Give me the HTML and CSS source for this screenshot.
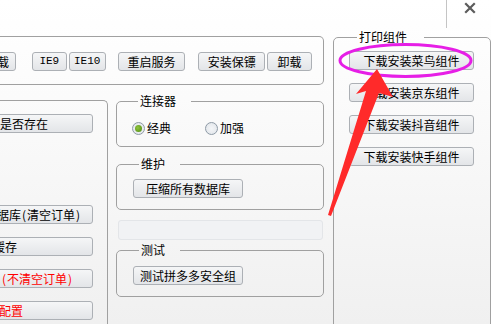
FILE: index.html
```html
<!DOCTYPE html>
<html lang="zh-CN">
<head>
<meta charset="utf-8">
<title>设置</title>
<link rel="stylesheet" href="styles.css">
</head>
<body>
<div class="window">
  <div class="titlebar">
    <span class="vline"></span>
    <svg class="close" width="12" height="12" viewBox="0 0 12 12"><path d="M2 2 L10 10 M10 2 L2 10" stroke="#5c5c5c" stroke-width="2.2" stroke-linecap="square"/></svg>
  </div>
  <div class="content">
    <div class="main">
      <div class="toolbar">
        <button class="btn cut tb-cut">载</button>
        <button class="btn ie w34">IE9</button>
        <button class="btn ie w36">IE10</button>
        <button class="btn w68">重启服务</button>
        <button class="btn w67">安装保镖</button>
        <button class="btn w45">卸载</button>
      </div>
      <div class="lower">
        <div class="leftbox">
          <button class="btn cut pr44">是否存在</button>
          <button class="btn cut pr12 first-gap">据库<span class="par">(</span>清空订单<span class="par">)</span></button>
          <button class="btn cut pr75">缓存</button>
          <button class="btn cut pr20 red"><span class="par">(</span>不清空订单<span class="par">)</span></button>
          <button class="btn cut pr69 red">配置</button>
        </div>
        <div class="midcol">
          <fieldset class="group g-conn">
            <legend>连接器</legend>
            <div class="radios">
              <label class="radio"><span class="dot on"></span>经典</label>
              <label class="radio"><span class="dot"></span>加强</label>
            </div>
          </fieldset>
          <fieldset class="group g-maint">
            <legend>维护</legend>
            <button class="btn w110">压缩所有数据库</button>
          </fieldset>
          <div class="field"></div>
          <fieldset class="group g-test">
            <legend>测试</legend>
            <button class="btn w110">测试拼多多安全组</button>
          </fieldset>
        </div>
      </div>
    </div>
    <fieldset class="group g-print">
      <legend>打印组件</legend>
      <button class="btn w125">下载安装菜鸟组件</button>
      <button class="btn w125">下载安装京东组件</button>
      <button class="btn w125">下载安装抖音组件</button>
      <button class="btn w125">下载安装快手组件</button>
    </fieldset>
  </div>
  <svg class="marks" width="491" height="324" viewBox="0 0 491 324">
    <ellipse cx="405.5" cy="60.5" rx="65.5" ry="16" fill="none" stroke="#e61ee6" stroke-width="3"/>
    <polygon points="377,69 393,97 379,93 331,216 328,215 366,91 356,94" fill="#ff2a2a"/>
  </svg>
</div>
</body>
</html>
```
FILE: styles.css
```css
* { box-sizing: border-box; }
html, body { margin: 0; padding: 0; }
body {
  width: 491px;
  height: 324px;
  overflow: hidden;
  font-family: "Noto Sans CJK SC", "Noto Sans", sans-serif;
  font-size: 12px;
  color: #000;
}
.window {
  position: relative;
  width: 491px;
  height: 324px;
  overflow: hidden;
  background: linear-gradient(#ffffff 0%, #fbfbfb 30%, #f0f0f0 100%);
}
.titlebar {
  height: 31px;
  display: flex;
  justify-content: flex-end;
  align-items: flex-start;
}
.vline {
  width: 1px;
  height: 28px;
  background: #c4c4c4;
  margin-right: 17px;
}
.close {
  margin-top: 2px;
  margin-right: 15px;
}
.content {
  display: flex;
  align-items: flex-start;
  margin-left: -80px;
}
.main {
  width: 404px;
  margin-top: 5px;
  flex: none;
}
.btn {
  font: inherit;
  font-size: 12px;
  line-height: 17px;
  height: 19px;
  padding: 0;
  margin: 0;
  color: #000;
  background: linear-gradient(#f5f6f7, #e3e5e8);
  border: 1px solid #acb0b5;
  border-radius: 3px;
  display: block;
  text-align: center;
  white-space: nowrap;
}
.btn.cut { width: 172px; text-align: right; }
.btn.red { color: #ff0000; }
.par {
  display: inline-block;
  width: 6px;
  text-align: center;
}
.btn.ie {
  font-family: "Liberation Mono", monospace;
  font-size: 11px;
}
.w34 { width: 35px; }
.w36 { width: 37px; }
.w45 { width: 45px; }
.w67 { width: 67px; }
.w68 { width: 68px; }
.w110 { width: 110px; }
.w125 { width: 125px; }

.toolbar {
  display: flex;
  align-items: center;
  border: 1px solid #a0a0a0;
  border-left: none;
  border-radius: 0 5px 5px 0;
  padding: 14px 11px 13px 0;
  height: 49px;
}
.toolbar .tb-cut { width: 40px; padding-right: 6px; margin-left: 56px; margin-right: 16px; }
.toolbar .w36 { margin-left: 2px; }
.toolbar .w68 { margin-left: 12px; }
.toolbar .w67 { margin-left: 13px; }
.toolbar .w45 { margin-left: 2px; }

.lower {
  display: flex;
  align-items: flex-start;
  margin-top: 10px;
}
.leftbox {
  width: 188px;
  height: 240px;
  margin-top: 5px;
  border: 1px solid #a0a0a0;
  border-left: none;
  border-bottom: none;
  border-radius: 0 5px 0 0;
  padding: 13px 14px 0 0;
  display: flex;
  flex-direction: column;
  align-items: flex-end;
  gap: 13px;
}
.leftbox .first-gap { margin-top: 59px; }
.pr44 { padding-right: 44px; }
.pr12 { padding-right: 11px; }
.pr75 { padding-right: 75px; }
.pr20 { padding-right: 19px; }
.pr69 { padding-right: 69px; }

.midcol {
  width: 208px;
  margin-left: 8px;
  display: flex;
  flex-direction: column;
}
.group {
  margin: 0;
  border: 1px solid #a0a0a0;
  border-radius: 5px;
  min-width: 0;
}
.group legend {
  font-size: 12px;
  line-height: 12px;
  height: 12px;
  padding: 0 15px 0 2px;
  margin-left: 6px;
}
.g-conn { padding: 14px 0 11px 15px; }
.radios { display: flex; gap: 34px; }
.radio { display: flex; align-items: center; gap: 2px; height: 14px; line-height: 14px; }
.dot {
  width: 13px;
  height: 13px;
  border-radius: 50%;
  border: 1px solid #8e9aa6;
  background: radial-gradient(circle, #f4f6f8 0%, #dfe3e8 100%);
  display: inline-flex;
  align-items: center;
  justify-content: center;
}
.dot.on::after {
  content: "";
  width: 7px;
  height: 7px;
  border-radius: 50%;
  background: radial-gradient(circle at 40% 40%, #8fc43c, #4f8a12);
}
.g-maint { margin-top: 11px; padding: 9px 0 11px 16px; }
.field {
  margin: 10px 1px 0 2px;
  height: 20px;
  border: 1px solid #e3e5e8;
  border-radius: 3px;
  background: #f1f2f4;
}
.g-test { margin-top: 4px; padding: 10px 0 11px 16px; }

.g-print {
  width: 200px;
  height: 320px;
  margin-left: 9px;
  padding: 8px 0 0 15px;
  display: flex;
  flex-direction: column;
  gap: 13px;
}
.g-print legend { padding-right: 17px; margin-left: 8px; }

.marks {
  position: absolute;
  left: 0;
  top: 0;
  pointer-events: none;
}
```
